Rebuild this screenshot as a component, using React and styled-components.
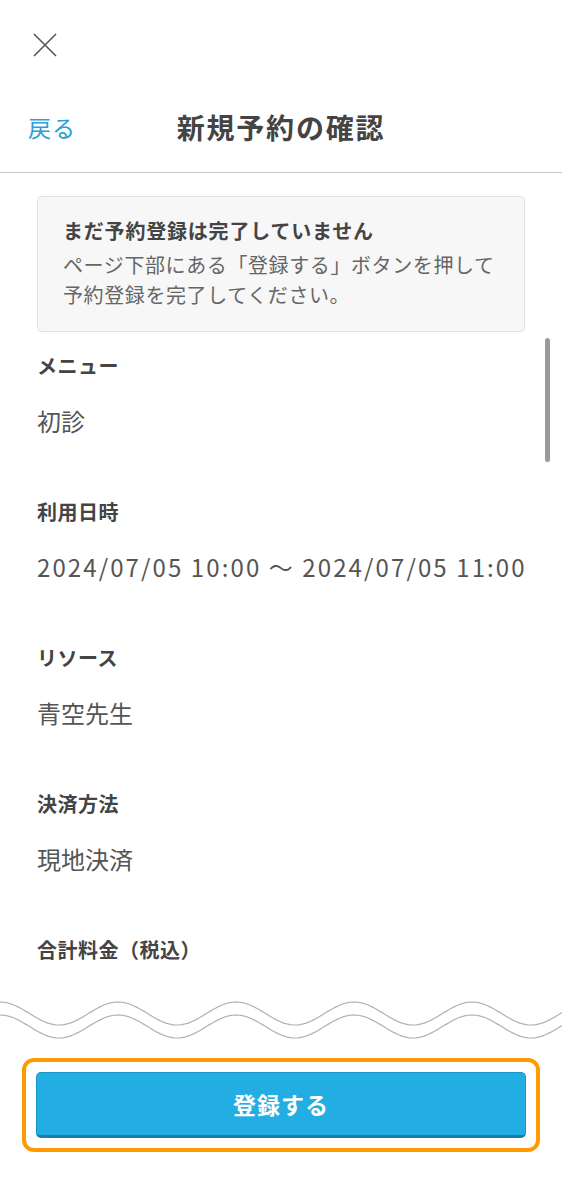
import styled, { createGlobalStyle } from 'styled-components';

const GlobalStyle = createGlobalStyle`
  html, body {
    margin: 0;
    padding: 0;
    background: #fff;
  }
  body {
    font-family: "Noto Sans CJK JP", "Noto Sans", sans-serif;
    color: #444;
  }
`;

const Page = styled.div`
  display: flex;
  flex-direction: column;
  height: 100vh;
  overflow: hidden;
`;

const TopBar = styled.div`
  height: 90px;
  padding: 33px 0 0 33px;
  box-sizing: border-box;
`;

const Nav = styled.div`
  display: grid;
  grid-template-columns: 1fr auto 1fr;
  align-items: center;
  height: 83px;
  padding: 0 28px 9px;
  box-sizing: border-box;
  border-bottom: 1px solid #c4c4c4;
`;

const Back = styled.span`
  font-size: 23px;
  color: #2a9fd6;
  letter-spacing: 1px;
`;

const Title = styled.h1`
  margin: 0;
  font-size: 28px;
  font-weight: 700;
  color: #444;
  letter-spacing: 1.8px;
`;

const Content = styled.div`
  position: relative;
  flex: 1;
  overflow: hidden;
  padding: 23px 37px 0 37px;
`;

const Notice = styled.div`
  background: #f7f7f7;
  border: 1px solid #e2e2e2;
  border-radius: 4px;
  padding: 19px 16px 21px 25px;
`;

const NoticeTitle = styled.div`
  font-size: 20px;
  line-height: 30px;
  font-weight: 700;
  color: #444;
  letter-spacing: 0.8px;
  margin-bottom: 4px;
`;

const NoticeBody = styled.div`
  font-size: 20px;
  line-height: 30px;
  color: #666;
  letter-spacing: 0.6px;
  white-space: nowrap;
`;

const Section = styled.div`
  margin-top: ${(p) => (p.$first ? '19px' : '59px')};
`;

const Label = styled.div`
  font-size: 20px;
  line-height: 30px;
  font-weight: 700;
  color: #444;
  letter-spacing: 0.5px;
`;

const Value = styled.div`
  margin-top: 23px;
  font-size: 24px;
  line-height: 34px;
  color: #555;
  white-space: nowrap;
  letter-spacing: ${(p) => (p.$wide ? '2.1px' : '0')};
`;

const Thumb = styled.div`
  position: absolute;
  top: 165px;
  right: 12px;
  width: 5px;
  height: 124px;
  border-radius: 3px;
  background: #9a9a9a;
`;

const Footer = styled.div`
  flex: none;
  padding-bottom: 33px;
`;

const Wave = styled.svg`
  display: block;
  width: 562px;
  height: 52px;
`;

const Highlight = styled.div`
  margin: 16px 22px 0;
  border: 4px solid #ff9a00;
  border-radius: 12px;
  padding: 10px;
`;

const SubmitButton = styled.button`
  display: block;
  width: 100%;
  height: 66px;
  background: #22aee3;
  border: 1px solid #1b95c6;
  border-bottom: 3px solid #1a7ea8;
  border-radius: 5px;
  color: #fff;
  font-family: inherit;
  font-size: 23px;
  font-weight: 700;
  letter-spacing: 1px;
`;

const wavePath = (offset) => {
  const period = 118;
  const amp = 11.5;
  const mid = 23.5 + offset;
  let d = '';
  for (let x = 0; x <= 562; x += 2) {
    const y = mid - amp * Math.cos((x / period) * 2 * Math.PI);
    d += `${x === 0 ? 'M' : 'L'}${x},${y.toFixed(2)} `;
  }
  return d;
};

const items = [
  { label: 'メニュー', value: '初診' },
  { label: '利用日時', value: '2024/07/05 10:00 〜 2024/07/05 11:00', wide: true },
  { label: 'リソース', value: '青空先生' },
  { label: '決済方法', value: '現地決済' },
  { label: '合計料金（税込）', value: '' },
];

const App = () => {
  return (
    <Page>
      <GlobalStyle />
      <TopBar>
        <svg width="24" height="24" viewBox="0 0 24 24">
          <path d="M1 1 L23 23 M23 1 L1 23" stroke="#555" strokeWidth="1.6" fill="none" />
        </svg>
      </TopBar>
      <Nav>
        <Back>戻る</Back>
        <Title>新規予約の確認</Title>
        <span />
      </Nav>
      <Content>
        <Notice>
          <NoticeTitle>まだ予約登録は完了していません</NoticeTitle>
          <NoticeBody>
            ページ下部にある「登録する」ボタンを押して
            <br />
            予約登録を完了してください。
          </NoticeBody>
        </Notice>
        {items.map((item, i) => (
          <Section key={item.label} $first={i === 0}>
            <Label>{item.label}</Label>
            {item.value && <Value $wide={item.wide}>{item.value}</Value>}
          </Section>
        ))}
        <Thumb />
      </Content>
      <Footer>
        <Wave viewBox="0 0 562 52">
          <path d={wavePath(0)} stroke="#b0b0b0" strokeWidth="1.2" fill="none" />
          <path d={wavePath(13)} stroke="#b0b0b0" strokeWidth="1.2" fill="none" />
        </Wave>
        <Highlight>
          <SubmitButton>登録する</SubmitButton>
        </Highlight>
      </Footer>
    </Page>
  );
};

export default App;
